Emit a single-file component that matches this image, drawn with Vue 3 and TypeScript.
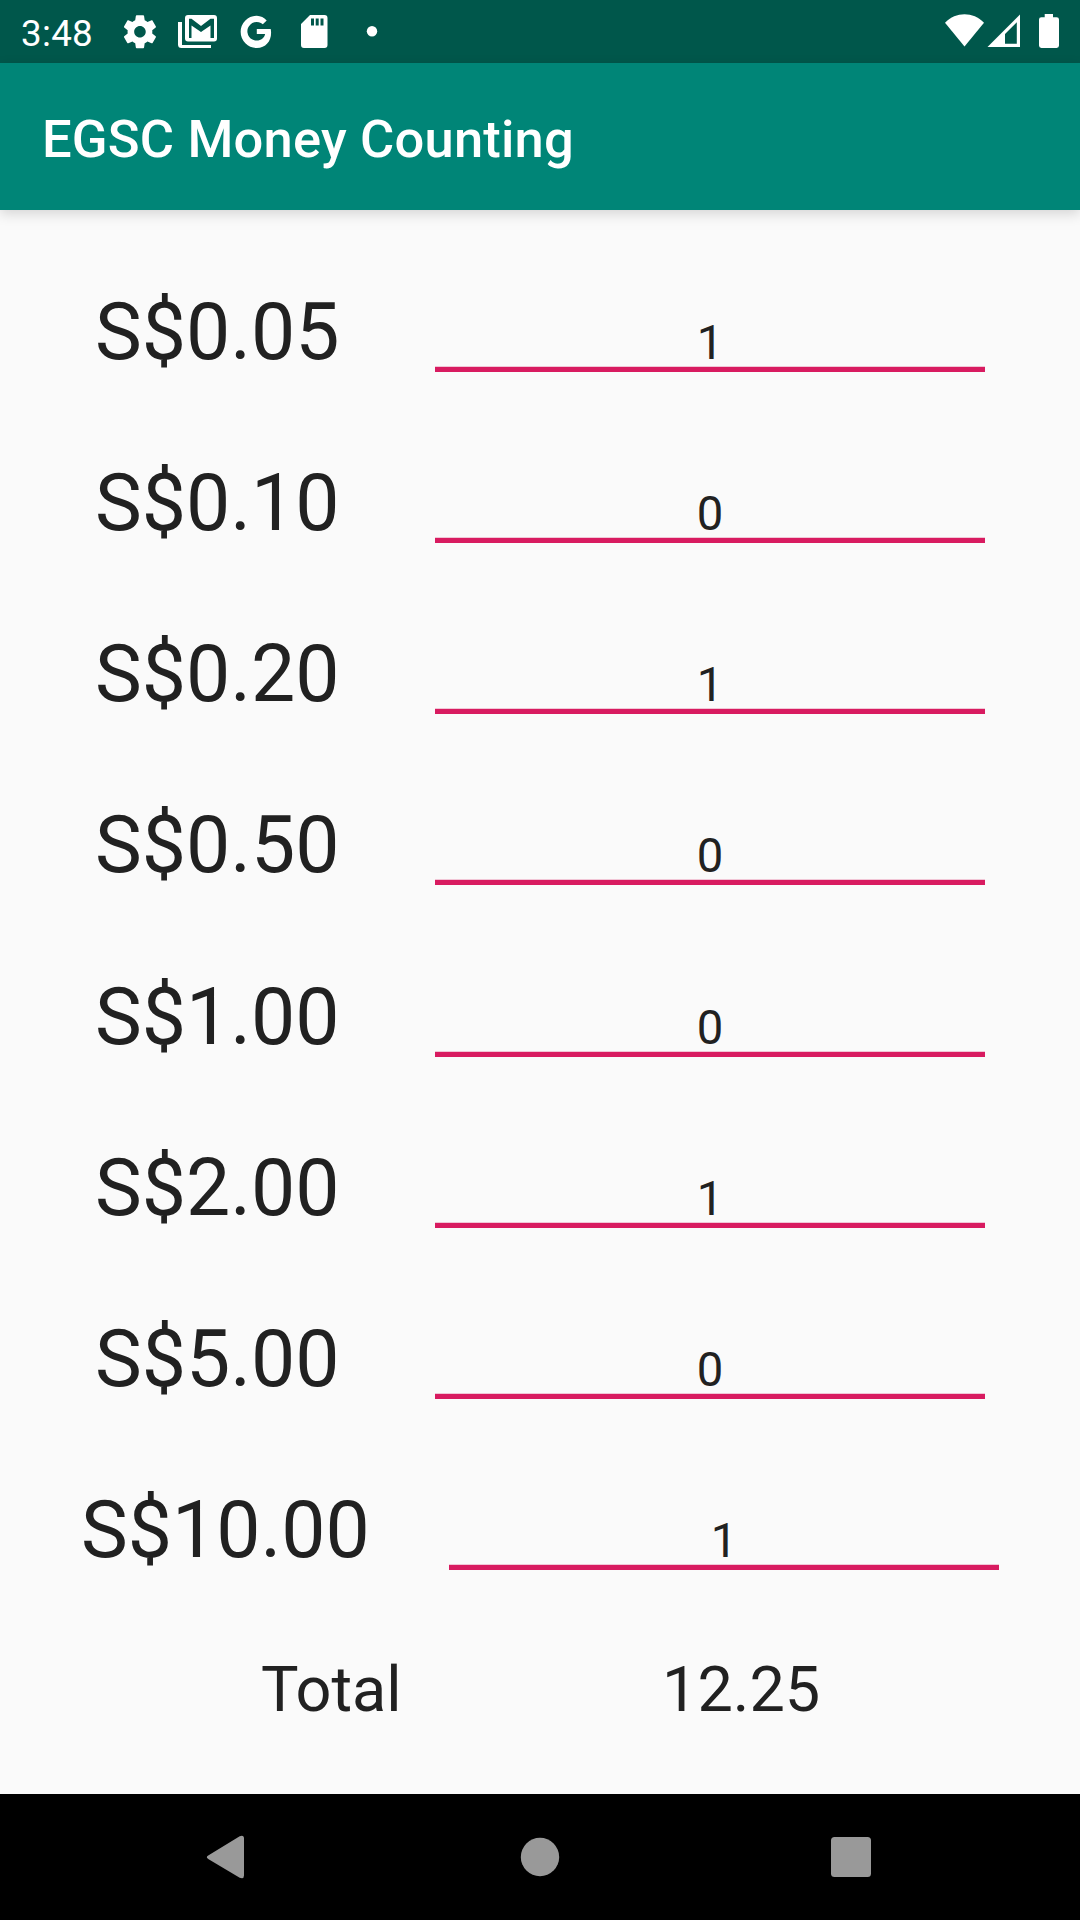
<script setup lang="ts">
interface Denomination {
  label: string
  count: number
  wide?: boolean
}

const denominations: Denomination[] = [
  { label: 'S$0.05', count: 1 },
  { label: 'S$0.10', count: 0 },
  { label: 'S$0.20', count: 1 },
  { label: 'S$0.50', count: 0 },
  { label: 'S$1.00', count: 0 },
  { label: 'S$2.00', count: 1 },
  { label: 'S$5.00', count: 0 },
  { label: 'S$10.00', count: 1, wide: true },
]

const total = '12.25'
</script>

<template>
  <div class="screen">
    <div class="status">
      <span class="clock">3:48</span>
      <svg class="status-icons" width="360" height="63" viewBox="0 0 360 63" fill="#fff">
        <!-- settings -->
        <g transform="translate(0.15 12) scale(1.65)">
          <path d="M19.43 12.98c.04-.32.07-.64.07-.98s-.03-.66-.07-.98l2.11-1.65c.19-.15.24-.42.12-.64l-2-3.46c-.12-.22-.39-.3-.61-.22l-2.49 1c-.52-.4-1.08-.73-1.69-.98l-.38-2.65C14.46 2.18 14.25 2 14 2h-4c-.25 0-.46.18-.49.42l-.38 2.65c-.61.25-1.17.59-1.69.98l-2.49-1c-.23-.09-.49 0-.61.22l-2 3.46c-.13.22-.07.49.12.64l2.11 1.65c-.04.32-.07.65-.07.98s.03.66.07.98l-2.11 1.65c-.19.15-.24.42-.12.64l2 3.46c.12.22.39.3.61.22l2.49-1c.52.4 1.08.73 1.69.98l.38 2.65c.03.24.24.42.49.42h4c.25 0 .46-.18.49-.42l.38-2.65c.61-.25 1.17-.59 1.69-.98l2.49 1c.23.09.49 0 .61-.22l2-3.46c.12-.22.07-.49-.12-.64l-2.11-1.65zM12 15.5c-1.93 0-3.5-1.57-3.5-3.5s1.57-3.5 3.5-3.5 3.5 1.57 3.5 3.5-1.57 3.5-3.5 3.5z" />
        </g>
        <!-- stacked mail -->
        <path d="M58 22v22.500q0 3.500 3.500 3.500H91v-3H62V22z" />
        <path fill-rule="evenodd" d="M68 15h26q3 0 3 3v20.500q0 3-3 3H68q-3 0-3-3V18q0-3 3-3zM69 38h2.500V25.500L81 32l9.500-6.500V38H94V18.800h-3.500L81 26l-9.500-7.200H69z" />
        <!-- letter g mark -->
        <path d="M150.200 28.900H136.300v5.200h8.300c-.8 4-4 6.500-8.300 6.500a9.300 9.300 0 1 1 6-16.300l3.900-3.900a14.800 14.800 0 0 0-9.900-4.700 16.150 16.150 0 1 0 0 32.300c8.800 0 14.300-6.500 14.300-15.200q0-2-.4-3.900z" transform="translate(0.500 0)" />
        <!-- sd card -->
        <path fill-rule="evenodd" d="M190 15h14.500q3 0 3 3v27q0 3-3 3H184q-3 0-3-3V24zM191 18.500v7h3v-7zM195.700 18.500v7h3v-7zM200.500 18.500v7h3v-7z" />
        <circle cx="252" cy="31.200" r="5.200" />
      </svg>
      <svg class="signal" width="160" height="63" viewBox="0 0 160 63" fill="#fff">
        <path d="M25 22.800C36 11.500 53 11.500 64 22.800L44.500 46.500z" />
        <path fill-rule="evenodd" d="M100 14.500V47H67.500zM96.800 22.300L85 34v9.700h11.800z" />
        <path d="M124.700 14h8.300v3.200h3.600q2.400 0 2.400 2.400v26q0 2.400-2.400 2.400h-15.200q-2.400 0-2.400-2.400v-26q0-2.400 2.400-2.400h3.300z" />
      </svg>
    </div>

    <header class="appbar">
      <h1>EGSC Money Counting</h1>
    </header>

    <main class="content">
      <div v-for="d in denominations" :key="d.label" class="row" :class="{ wide: d.wide }">
        <span class="label">{{ d.label }}</span>
        <div class="field">{{ d.count }}</div>
      </div>
      <div class="total">
        <span class="total-label">Total</span>
        <span>{{ total }}</span>
      </div>
    </main>

    <nav class="navbar">
      <svg width="1080" height="126" viewBox="0 0 1080 126" fill="#999">
        <path d="M208.200 61.400L239.700 42.300Q244 40.700 244 44.500V81.500Q244 85.300 239.700 83.700L208.200 64.900Q205.500 63 208.200 61.400z" />
        <circle cx="540" cy="63" r="19.200" />
        <rect x="831" y="43" width="40" height="40" rx="3.500" />
      </svg>
    </nav>
  </div>
</template>

<style>
body {
  margin: 0;
}
</style>

<style scoped>
.screen {
  width: 1080px;
  height: 1920px;
  display: flex;
  flex-direction: column;
  background: #fafafa;
  color: #212121;
  font-family: Roboto, sans-serif;
  overflow: hidden;
}
.status {
  height: 63px;
  flex: none;
  display: flex;
  background: #00574b;
}
.clock {
  box-sizing: border-box;
  width: 120px;
  padding-left: 21px;
  line-height: 68px;
  font-size: 36.75px;
  letter-spacing: 0.3px;
  color: #fff;
}
.signal {
  margin-left: auto;
}
.appbar {
  height: 147px;
  flex: none;
  background: #008577;
  color: #fff;
  box-shadow: 0 4px 12px rgba(0, 0, 0, 0.15);
}
h1 {
  margin: 0;
  padding-left: 42px;
  font-size: 52.5px;
  font-weight: 500;
  line-height: 153px;
  letter-spacing: 0.19px;
}
.content {
  flex: 1;
  padding-top: 42px;
}
.row {
  height: 171px;
  display: flex;
  padding-left: 95px;
}
.row:nth-child(5) {
  padding-top: 1px;
}
.label {
  width: 340px;
  font-size: 78.75px;
  line-height: 161px;
}
.row.wide {
  padding-left: 81px;
}
.wide .label {
  width: 368px;
}
.field {
  box-sizing: border-box;
  width: 550px;
  height: 120px;
  border-bottom: 5px solid #d81b60;
  box-shadow: inset 0 -1px #f1c6d6;
  padding-top: 63px;
  text-align: center;
  font-size: 47.25px;
  line-height: 56px;
}
.total {
  display: flex;
  padding: 32px 0 0 261px;
  font-size: 63px;
  line-height: 74px;
}
.total-label {
  width: 401px;
}
.navbar {
  height: 126px;
  flex: none;
  background: #000;
}
svg {
  display: block;
}
</style>
